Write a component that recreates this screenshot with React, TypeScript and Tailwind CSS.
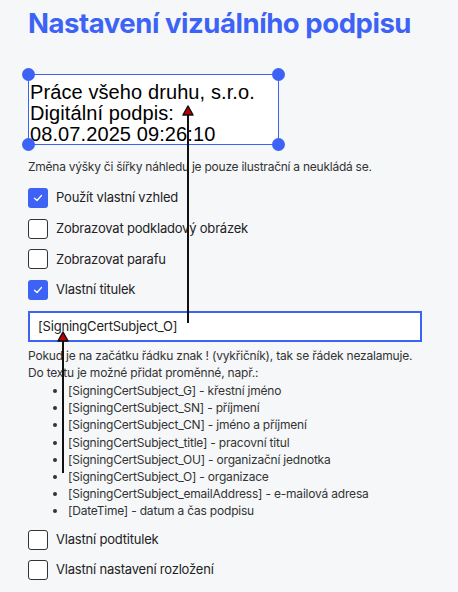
import React from "react";

const Check = ({ checked, label }: { checked: boolean; label: string }) => (
  <div className="flex items-center gap-[8px] h-[20px]">
    {checked ? (
      <div className="w-[20px] h-[20px] rounded-[3px] bg-[#3d63f6] flex items-center justify-center">
        <svg width="12" height="12" viewBox="0 0 12 12" fill="none">
          <path d="M2.5 6.2 L5 8.5 L9.5 3.5" stroke="white" strokeWidth="1.3" strokeLinecap="round" strokeLinejoin="round" />
        </svg>
      </div>
    ) : (
      <div className="w-[20px] h-[20px] rounded-[3px] border border-[#333] bg-white" />
    )}
    <span className="text-[13px] text-[#222] tracking-[-0.2px]">{label}</span>
  </div>
);

const vars = [
  "[SigningCertSubject_G] - křestní jméno",
  "[SigningCertSubject_SN] - příjmení",
  "[SigningCertSubject_CN] - jméno a příjmení",
  "[SigningCertSubject_title] - pracovní titul",
  "[SigningCertSubject_OU] - organizační jednotka",
  "[SigningCertSubject_O] - organizace",
  "[SigningCertSubject_emailAddress] - e-mailová adresa",
  "[DateTime] - datum a čas podpisu",
];

export default function App() {
  return (
    <div className="relative w-[458px] h-[592px] bg-[#f6f7f9] overflow-hidden" style={{ fontFamily: "Inter, 'Noto Sans', sans-serif" }}>
      <div className="pl-[28px] pr-[36px]">
        <h1 className="pt-[5px] text-[27.5px] leading-[36px] font-bold text-[#3d63f6] tracking-[-0.45px] whitespace-nowrap">
          Nastavení vizuálního podpisu
        </h1>
        <div className="mt-[33px] relative w-[251px] h-[71px] border border-[#3d63f6] bg-white">
          <div className="pl-[1px] pt-[7px] text-[20px] leading-[21px] text-black tracking-[0.1px]" style={{ fontFamily: "'Liberation Sans', Arial, sans-serif" }}>
            <div>Práce všeho druhu, s.r.o.</div>
            <div>Digitální podpis:</div>
            <div>08.07.2025 09:26:10</div>
          </div>
          <span className="absolute -left-[7px] -top-[7px] w-[13px] h-[13px] rounded-full bg-[#3d63f6]" />
          <span className="absolute -right-[7px] -top-[7px] w-[13px] h-[13px] rounded-full bg-[#3d63f6]" />
          <span className="absolute -left-[7px] -bottom-[7px] w-[13px] h-[13px] rounded-full bg-[#3d63f6]" />
          <span className="absolute -right-[7px] -bottom-[7px] w-[13px] h-[13px] rounded-full bg-[#3d63f6]" />
        </div>
        <p className="mt-[13px] text-[12px] leading-[18px] text-[#333] tracking-[-0.25px] whitespace-nowrap">
          Změna výšky či šířky náhledu je pouze ilustrační a neukládá se.
        </p>
        <div className="mt-[12px] flex flex-col gap-[10.7px]">
          <Check checked label="Použít vlastní vzhled" />
          <Check checked={false} label="Zobrazovat podkladový obrázek" />
          <Check checked={false} label="Zobrazovat parafu" />
          <Check checked label="Vlastní titulek" />
        </div>
        <div className="mt-[11px] h-[31px] border-2 border-[#3d63f6] bg-white flex items-center pl-[8px] text-[13px] text-[#222] tracking-[-0.2px]">
          [SigningCertSubject_O]
        </div>
        <div className="mt-[5px] text-[12px] leading-[17.3px] text-[#333] tracking-[-0.2px] whitespace-nowrap">
          <p>Pokud je na začátku řádku znak ! (vykřičník), tak se řádek nezalamuje.</p>
          <p>Do textu je možné přidat proměnné, např.:</p>
          <ul className="list-disc pl-[40px] mt-[0.5px]">
            {vars.map((v) => (
              <li key={v} className="leading-[17.15px]">{v}</li>
            ))}
          </ul>
        </div>
        <div className="mt-[10.5px] flex flex-col gap-[10px]">
          <Check checked={false} label="Vlastní podtitulek" />
          <Check checked={false} label="Vlastní nastavení rozložení" />
        </div>
      </div>
      <svg className="absolute left-0 top-0 pointer-events-none" width="458" height="592">
        <line x1="188" y1="323" x2="188" y2="114" stroke="#111" strokeWidth="2" />
        <polygon points="188,106 183,115 193,115" fill="#c00000" stroke="#111" strokeWidth="1.5" strokeLinejoin="round" />
        <line x1="63" y1="473" x2="63" y2="340" stroke="#111" strokeWidth="2" />
        <polygon points="63,332 58,341 68,341" fill="#c00000" stroke="#111" strokeWidth="1.5" strokeLinejoin="round" />
      </svg>
    </div>
  );
}
